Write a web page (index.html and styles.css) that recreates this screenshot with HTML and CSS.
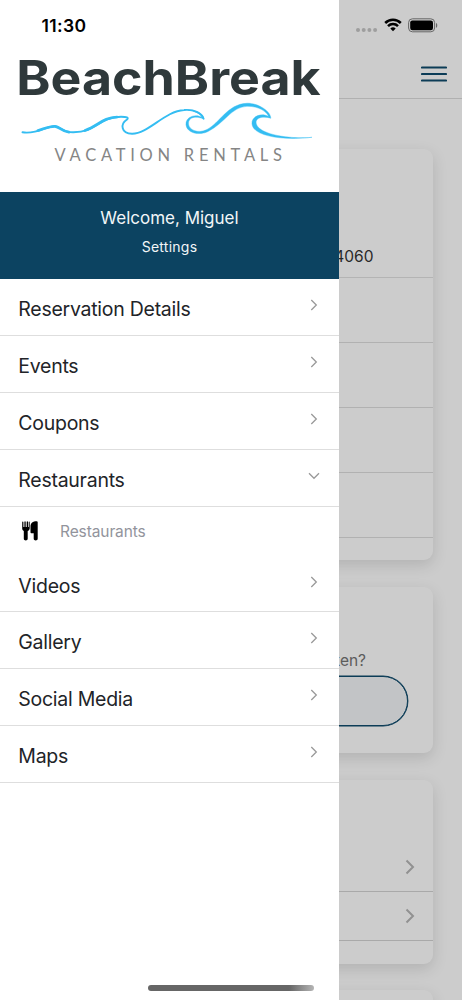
FILE: index.html
```
<!DOCTYPE html>
<html lang="en">
<head>
<meta charset="utf-8">
<meta name="viewport" content="width=device-width, initial-scale=1">
<title>BeachBreak Vacation Rentals</title>
<link rel="stylesheet" href="styles.css">
</head>
<body>
<div class="screen">
  <div class="page">
    <header class="topbar">
      <div class="status">
        <svg class="cell" width="22" height="4" viewBox="0 0 22 4"><circle cx="2" cy="2" r="2"/><circle cx="7.7" cy="2" r="2"/><circle cx="13.4" cy="2" r="2"/><circle cx="19.1" cy="2" r="2"/></svg>
        <svg class="wifi" width="18" height="14" viewBox="0 0 18 14"><path d="M1.2 5A11 11 0 0 1 16.800 5M4 8.100a7 7 0 0 1 10 0" fill="none" stroke="#000" stroke-width="2.500"/><path d="M9 13.200 6.300 10.500a3.800 3.800 0 0 1 5.400 0z"/></svg>
        <svg class="battery" width="30" height="15" viewBox="0 0 30 15"><rect x=".6" y=".8" width="26" height="13" rx="3.800" fill="none" stroke="#808080" stroke-width="1"/><rect x="2.200" y="2.400" width="22.800" height="9.800" rx="2.200"/><path d="M28 5c1.700.6 1.700 4.200 0 4.800z" fill="#808080"/></svg>
      </div>
      <svg class="burger" width="26" height="16" viewBox="0 0 26 16"><path d="M1 1.500h24M1 8h24M1 14.500h24" fill="none" stroke="#104c6d" stroke-width="2.100" stroke-linecap="round"/></svg>
    </header>
    <main class="cards">
      <section class="card">
        <div class="summary">4060</div>
        <div class="line"></div><div class="line"></div><div class="line"></div><div class="line"></div>
        <div class="foot"></div>
      </section>
      <section class="card card-ask">
        <div class="question">ken?</div>
        <div class="pill"></div>
      </section>
      <section class="card card-links">
        <div class="link tall"><svg width="10" height="16" viewBox="0 0 10 16"><path d="M1.500 1.500 8 8l-6.500 6.500"/></svg></div>
        <div class="link"><svg width="10" height="16" viewBox="0 0 10 16"><path d="M1.500 1.500 8 8l-6.500 6.500"/></svg></div>
        <div class="foot"></div>
      </section>
      <section class="card card-last"></section>
    </main>
  </div>
  <div class="shade"></div>
  <aside class="drawer">
    <div class="brand">
      <div class="time">11:30</div>
      <svg class="logo" width="339" height="152" viewBox="0 40 339 152">
        <text class="logo-name" x="16.200" y="94.800" textLength="304.500" lengthAdjust="spacingAndGlyphs">BeachBreak</text>
        <g class="wave">
          <path d="M22.500 132.300C38 134.500 46 126 55 126.200C61 126.400 61 132 73 132.300C97 132.500 98 117 121 116.800C127 116.800 129 117.500 127 119.500C120 124 121 133.500 132 133.700C148 134 165 111 184 110C195 109 202 114 203.500 118.500" fill="none" stroke-width="1.900"/>
          <path d="M38 130.500C46 128 50 126 55 126.300C60 127 61 131 69 132.200M85 130.500C98 126 103 117.500 117 117" fill="none" stroke-width="2.700"/>
          <path stroke-width=".4" d="M203.800 119C203.500 114 197 110 188 110C195 111 201 114 202 117.500C197 113.500 185 116 186 125C187 133 199 136 208 131.500C225 123 231 107 247 106.300C259 106 267 112 268.500 116.500C262 112.500 251 116 252 124C253 136 282 140.800 312 137.300C294 139 266 136 258 127C252 119 261 115 270.800 118.300C271 112 259 103 247 103.200C227 104 220 123 207 129.500C198 134 189 130 188.500 124C188 117 196 115.500 203.800 119Z"/>
        </g>
        <text class="logo-sub" x="54.500" y="161" textLength="227.500" lengthAdjust="spacing">VACATION RENTALS</text>
      </svg>
    </div>
    <div class="welcome">
      <div class="hello">Welcome, Miguel</div>
      <div class="settings">Settings</div>
    </div>
    <nav class="menu">
      <div class="item"><span>Reservation Details</span><svg class="chev" width="12" height="12" viewBox="0 0 12 12"><path d="m3.300 1 5 5-5 5"/></svg></div>
      <div class="item"><span>Events</span><svg class="chev" width="12" height="12" viewBox="0 0 12 12"><path d="m3.300 1 5 5-5 5"/></svg></div>
      <div class="item"><span>Coupons</span><svg class="chev" width="12" height="12" viewBox="0 0 12 12"><path d="m3.300 1 5 5-5 5"/></svg></div>
      <div class="item"><span>Restaurants</span><svg class="chev" width="12" height="12" viewBox="0 0 12 12"><path d="m1 3.300 5 5 5-5"/></svg></div>
      <div class="sub">
        <svg width="16" height="20" viewBox="0 0 16 20"><path d="M.2 1.200C.2.300 1.400.3 1.400 1.200V6h1V1.100c0-1 1.300-1 1.300 0V6h1V1.100c0-1 1.300-1 1.300 0V6h.7V1.200c0-.9 1-.9 1 0v6.300C7.400 9 6.500 9.600 5.700 10v7.800c0 2.200-3.900 2.200-3.900 0V10C.8 9.500.2 8.800.2 7.500zM15.700 1.200v16.600c0 2.200-4 2.200-4 0v-5.600H9.300c-.6 0-.8-.3-.8-.9V5.500C8.500 2 10.800.3 14.700.3c.7 0 1 .3 1 .9z"/></svg>
        <span>Restaurants</span>
      </div>
      <div class="item"><span>Videos</span><svg class="chev" width="12" height="12" viewBox="0 0 12 12"><path d="m3.300 1 5 5-5 5"/></svg></div>
      <div class="item"><span>Gallery</span><svg class="chev" width="12" height="12" viewBox="0 0 12 12"><path d="m3.300 1 5 5-5 5"/></svg></div>
      <div class="item"><span>Social Media</span><svg class="chev" width="12" height="12" viewBox="0 0 12 12"><path d="m3.300 1 5 5-5 5"/></svg></div>
      <div class="item"><span>Maps</span><svg class="chev" width="12" height="12" viewBox="0 0 12 12"><path d="m3.300 1 5 5-5 5"/></svg></div>
    </nav>
  </aside>
  <div class="home-bar"></div>
</div>
</body>
</html>
```
FILE: styles.css
```
* { box-sizing: border-box; }
body { margin: 0; font-family: Inter, "Liberation Sans", sans-serif; }
svg { display: block; flex: none; }
.screen { position: relative; width: 462px; height: 1000px; overflow: hidden; background: #fff; }
.page { height: 1000px; overflow: hidden; }

.topbar { height: 99px; border-bottom: 1px solid #dcdcdc; display: flex; flex-direction: column; align-items: flex-end; }
.status { height: 66px; padding: 18px 24px 0 0; display: flex; align-items: flex-start; }
.cell { margin: 10px 6px 0 0; fill: #c6c6c6; }
.wifi { margin-right: 6.500px; }
.burger { margin-right: 15px; }

.cards { padding: 49.500px 29px 0; display: flex; flex-direction: column; }
.card { height: 411px; border-radius: 9px; background: #fff; box-shadow: 0 5px 15px rgba(0, 0, 0, .13); flex: none; }
.summary { height: 129px; padding: 98px 59.500px 0 0; text-align: right; font-size: 15.500px; line-height: 20px; color: #333; border-bottom: 1px solid #e2e2e2; }
.line { height: 65px; border-bottom: 1px solid #dedede; }
.card-ask { height: 166px; margin-top: 27px; padding: 64px 25px 0; }
.question { padding-right: 42px; text-align: right; font-size: 15.500px; line-height: 20px; color: #737373; }
.pill { margin-top: 5px; height: 50px; border: 1px solid #104c6d; border-radius: 25px; background: #f3f6f8; box-shadow: 0 0 0 .4px #104c6d; }
.card-links { height: 184px; margin-top: 27px; }
.link { height: 49px; padding: 16px 18px 0 0; border-bottom: 1px solid #d4d4d4; display: flex; justify-content: flex-end; }
.link.tall { height: 112px; padding-top: 79px; }
.link path { fill: none; stroke: #b6b6b6; stroke-width: 2; }
.card-last { height: 100px; margin-top: 26px; }

.shade { position: absolute; inset: 0; background: rgba(0, 0, 0, .2); }
.drawer { position: absolute; left: 0; top: 0; width: 339px; height: 1000px; background: #fff; }
.brand { height: 192px; }
.time { height: 40px; padding: 15px 0 0 41.500px; font-size: 17.500px; font-weight: 600; line-height: 22px; letter-spacing: .35px; color: #000; }
.logo-name { font: 700 47.500px Inter, sans-serif; fill: #2f393b; }
.logo-sub { font: 400 16.500px Lato, sans-serif; fill: #858585; }
.wave { fill: #34bdf2; stroke: #34bdf2; stroke-linecap: round; }
.welcome { height: 87px; padding-top: 14.500px; background: #0c4361; color: #f2f6f8; text-align: center; }
.hello { font-size: 17px; line-height: 22px; }
.settings { margin-top: 8.500px; font-size: 14px; line-height: 20px; letter-spacing: .25px; }
.item { height: 56.900px; padding: 16px 19.500px 0 18.300px; border-bottom: 1px solid #dedede; display: flex; justify-content: space-between; color: #222428; font-size: 19.500px; line-height: 28px; letter-spacing: -.26px; }
.chev { margin-top: 4px; }
.chev path { fill: none; stroke: #999; stroke-width: 1.300; }
.sub { height: 49px; padding: 14px 0 0 22px; display: flex; gap: 22px; color: #92949c; font-size: 15.500px; line-height: 22px; letter-spacing: -.1px; }
.home-bar { position: absolute; left: 148px; top: 985px; width: 166px; height: 6px; border-radius: 3px; background: linear-gradient(90deg, #666 85%, #b5b5b5); }
```
